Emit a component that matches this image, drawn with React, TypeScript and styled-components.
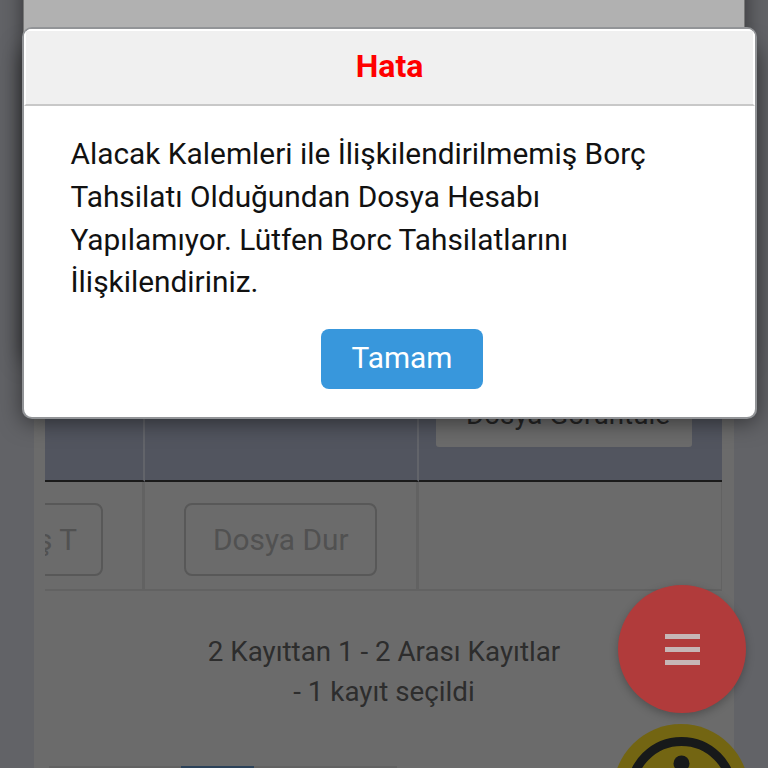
import React from 'react';
import styled, { createGlobalStyle } from 'styled-components';

const GlobalStyle = createGlobalStyle`
  * {
    box-sizing: border-box;
  }

  body {
    margin: 0;
    font-family: Roboto, "Liberation Sans", sans-serif;
  }
`;

const Page = styled.div`
  position: relative;
  width: 768px;
  height: 768px;
  overflow: hidden;
  background-color: #626367;
`;

const Card = styled.main`
  height: 768px;
  margin: 0 34px;
  padding: 0 12px 0 11px;
  display: flex;
  flex-direction: column;
  background-color: #6b6b6b;
`;

const Table = styled.div`
  height: 591px;
  display: grid;
  grid-template-columns: 100px 274px 303px;
  grid-template-rows: 482px 109px;
  overflow: hidden;
`;

const HeaderCell = styled.div`
  display: flex;
  flex-direction: column;
  justify-content: flex-end;
  align-items: center;
  padding-bottom: 33px;
  background-color: #52555f;
  border-right: 2px solid #62646a;
  border-bottom: 2px solid #1a1a1a;

  &:nth-child(3) {
    border-right-width: 0;
  }
`;

const ViewButton = styled.button`
  width: 256px;
  height: 60px;
  margin-right: 13px;
  padding: 0 0 6px 8px;
  border: none;
  border-radius: 3px;
  background-color: #6b6b6b;
  color: #252525;
  font: 400 27.75px Roboto, sans-serif;
  white-space: nowrap;
`;

const FilterCell = styled.div`
  display: flex;
  align-items: flex-start;
  justify-content: center;
  padding-top: 21px;
  border-right: 3px solid #626262;
  border-bottom: 2px solid #626262;

  &:last-child {
    border-right-width: 1px;
  }
`;

const FilterInput = styled.div<{ $clipped?: boolean }>`
  flex: none;
  width: 193px;
  height: 73px;
  margin-right: ${props => (props.$clipped ? '44px' : '0')};
  margin-left: ${props => (props.$clipped ? '-130px' : '0')};
  padding: ${props => (props.$clipped ? '0 24px 0 0' : '0 0 0 27px')};
  display: flex;
  align-items: center;
  justify-content: ${props => (props.$clipped ? 'flex-end' : 'flex-start')};
  border: 2px solid #585858;
  border-radius: 8px;
  color: #515151;
  font-size: 29.8px;
  white-space: nowrap;
`;

const RecordInfo = styled.div`
  margin-top: 41px;
  padding-left: 1px;
  color: #2d2d2d;
  font-size: 27.75px;
  line-height: 39.5px;
  text-align: center;
`;

const Pager = styled.div`
  width: 348px;
  height: 2px;
  margin-top: auto;
  margin-left: 4px;
  padding-left: 132px;
  background-color: #626262;
`;

const ActivePage = styled.div`
  width: 73px;
  height: 2px;
  background-color: #2c4259;
`;

const BackPanel = styled.div`
  position: absolute;
  top: -20px;
  left: 23px;
  width: 722px;
  height: 380px;
  border: 1px solid #777;
  background-color: #b1b1b1;
  box-shadow: 0 0 20px rgba(0, 0, 0, 0.5);
`;

const DialogShadow = styled.div`
  position: absolute;
  top: 44px;
  left: 22px;
  width: 735px;
  height: 374px;
  border-radius: 8px;
  box-shadow: 0 4px 22px rgba(0, 0, 0, 0.5);
`;

const Dialog = styled.section`
  position: absolute;
  top: 27px;
  left: 22px;
  width: 735px;
  height: 392px;
  display: flex;
  flex-direction: column;
  border: 2px solid #929497;
  border-radius: 10px;
  background-color: #fff;
  overflow: hidden;
`;

const DialogHeader = styled.header`
  height: 77px;
  flex: none;
  display: flex;
  align-items: center;
  justify-content: center;
  border: 2px solid #fff;
  border-bottom-color: #c8c8c8;
  background-color: #f0f0f0;
`;

const DialogTitle = styled.h2`
  margin: 0;
  padding-bottom: 3px;
  color: #f00;
  font-size: 32px;
  font-weight: 700;
`;

const DialogMessage = styled.p`
  margin: 27px 0 0 46.5px;
  color: #111;
  font-size: 29.85px;
  line-height: 42.75px;
  white-space: nowrap;
`;

const OkButton = styled.button`
  width: 162px;
  height: 60px;
  flex: none;
  margin: 25px 0 0 297px;
  padding: 0 0 3px;
  border: none;
  border-radius: 8px;
  background-color: #3897dc;
  color: #fff;
  font: 400 29.8px Roboto, sans-serif;
`;

const MenuButton = styled.button`
  position: absolute;
  top: 585px;
  left: 618px;
  width: 128px;
  height: 128px;
  padding: 1px 0 0;
  display: flex;
  flex-direction: column;
  align-items: center;
  justify-content: center;
  gap: 8px;
  border: none;
  border-radius: 50%;
  background-color: #b13b3b;
  box-shadow: 0 3px 8px rgba(0, 0, 0, 0.25);
`;

const MenuBar = styled.span`
  width: 35px;
  height: 5px;
  background-color: #c6b6b6;
`;

const AccessButton = styled.button`
  position: absolute;
  top: 724px;
  left: 613px;
  width: 136px;
  height: 136px;
  padding: 0;
  border: none;
  border-radius: 50%;
  background-color: #736512;
  overflow: hidden;

  svg {
    display: block;
  }
`;

const App: React.FC = () => {
  return (
    <Page>
      <GlobalStyle />
      <Card>
        <Table>
          <HeaderCell />
          <HeaderCell />
          <HeaderCell>
            <ViewButton>Dosya Görüntüle</ViewButton>
          </HeaderCell>
          <FilterCell>
            <FilterInput $clipped>ş T</FilterInput>
          </FilterCell>
          <FilterCell>
            <FilterInput>Dosya Dur</FilterInput>
          </FilterCell>
          <FilterCell />
        </Table>
        <RecordInfo>
          2 Kayıttan 1 - 2 Arası Kayıtlar
          <br />- 1 kayıt seçildi
        </RecordInfo>
        <Pager>
          <ActivePage />
        </Pager>
      </Card>

      <MenuButton aria-label="Menü">
        <MenuBar />
        <MenuBar />
        <MenuBar />
      </MenuButton>
      <AccessButton aria-label="Erişilebilirlik">
        <svg width="136" height="136" viewBox="0 0 136 136">
          <circle cx="68.5" cy="68" r="50.5" fill="none" stroke="#17191a" strokeWidth="9" />
          <circle cx="68.5" cy="39.5" r="8" fill="#17191a" />
          <path d="M43 54l18 5v17l-9 28M94 54l-18 5v17l9 28M61 59h15v17H61z" fill="none" stroke="#17191a" strokeWidth="7" />
        </svg>
      </AccessButton>

      <DialogShadow />
      <BackPanel />
      <Dialog role="alertdialog">
        <DialogHeader>
          <DialogTitle>Hata</DialogTitle>
        </DialogHeader>
        <DialogMessage>
          Alacak Kalemleri ile İlişkilendirilmemiş Borç
          <br />
          Tahsilatı Olduğundan Dosya Hesabı
          <br />
          Yapılamıyor. Lütfen Borc Tahsilatlarını
          <br />
          İlişkilendiriniz.
        </DialogMessage>
        <OkButton>Tamam</OkButton>
      </Dialog>
    </Page>
  );
};

export default App;
